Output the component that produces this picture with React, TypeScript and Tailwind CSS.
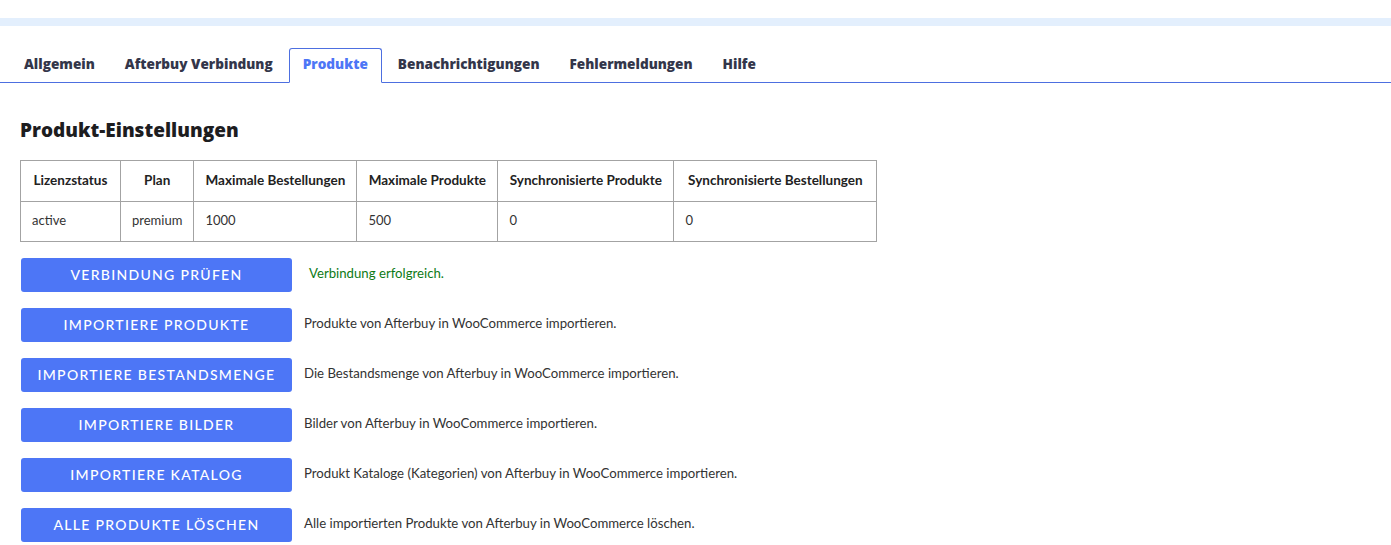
import React from "react";

const tabs = ["Allgemein", "Afterbuy Verbindung", "Produkte", "Benachrichtigungen", "Fehlermeldungen", "Hilfe"];

const cols = [
  { h: "Lizenzstatus", v: "active", w: "w-[100px]" },
  { h: "Plan", v: "premium", w: "w-[73px]" },
  { h: "Maximale Bestellungen", v: "1000", w: "w-[163px]" },
  { h: "Maximale Produkte", v: "500", w: "w-[141px]" },
  { h: "Synchronisierte Produkte", v: "0", w: "w-[176px]" },
  { h: "Synchronisierte Bestellungen", v: "0", w: "w-[203px]" },
];

const actions = [
  { b: "Importiere Produkte", t: "Produkte von Afterbuy in WooCommerce importieren." },
  { b: "Importiere Bestandsmenge", t: "Die Bestandsmenge von Afterbuy in WooCommerce importieren." },
  { b: "Importiere Bilder", t: "Bilder von Afterbuy in WooCommerce importieren." },
  { b: "Importiere Katalog", t: "Produkt Kataloge (Kategorien) von Afterbuy in WooCommerce importieren." },
  { b: "Alle Produkte löschen", t: "Alle importierten Produkte von Afterbuy in WooCommerce löschen." },
];

function Btn({ children }: { children: React.ReactNode }) {
  return (
    <button className="w-[271px] h-[34px] shrink-0 rounded-[3px] bg-[#4d76f6] text-white uppercase text-[14px] font-medium tracking-[1.3px] flex items-center justify-center pb-[2px]">
      {children}
    </button>
  );
}

export default function App() {
  return (
    <div className="bg-white min-h-[545px] text-[#2c2c2c]" style={{ fontFamily: "Lato, 'Noto Sans', sans-serif" }}>
      <div className="h-[18px]" />
      <div className="h-[8px] bg-[#e3effd]" />
      <div className="h-[22px]" />
      <div className="flex items-end border-b border-[#4d6fe0] pl-[10px]" style={{ fontFamily: "'Open Sans', Lato, sans-serif" }}>
        {tabs.map((t) => {
          const active = t === "Produkte";
          return (
            <div
              key={t}
              className={
                "h-[35px] px-[13px] mr-[2px] flex items-center text-[13.6px] font-extrabold rounded-t-[3px] -mb-px pb-[3px] " +
                (active
                  ? "border border-[#4d6fe0] border-b-white bg-white text-[#4d76f6]"
                  : "border border-transparent text-[#33364a]")
              }
            >
              {t}
            </div>
          );
        })}
      </div>
      <div className="px-[20px]">
        <h2 className="mt-[35px] text-[19px] font-extrabold text-[#1d1d1f] leading-[24px]" style={{ fontFamily: "'Open Sans', Lato, sans-serif" }}>Produkt-Einstellungen</h2>
        <table className="mt-[18px] border-collapse text-[13px]">
          <thead>
            <tr>
              {cols.map((c) => (
                <th key={c.h} className={c.w + " h-[41px] border border-[#a3a3a3] px-[10px] pb-[2px] font-bold text-[13.5px] text-center text-[#222] whitespace-nowrap"}>
                  {c.h}
                </th>
              ))}
            </tr>
          </thead>
          <tbody>
            <tr>
              {cols.map((c) => (
                <td key={c.h} className="h-[40px] border border-[#a3a3a3] px-[11px] pb-[2px] text-left text-[#333]">
                  {c.v}
                </td>
              ))}
            </tr>
          </tbody>
        </table>
        <div className="mt-[16px] flex flex-col gap-[16px] pl-[1px]">
          <div className="flex items-center gap-[17px]">
            <Btn>Verbindung prüfen</Btn>
            <span className="text-[13.2px] text-[#0d7a16] pb-[2px]">Verbindung erfolgreich.</span>
          </div>
          {actions.map((a) => (
            <div key={a.b} className="flex items-center gap-[12px]">
              <Btn>{a.b}</Btn>
              <span className="text-[13.2px] text-[#333] pb-[2px]">{a.t}</span>
            </div>
          ))}
        </div>
      </div>
    </div>
  );
}
